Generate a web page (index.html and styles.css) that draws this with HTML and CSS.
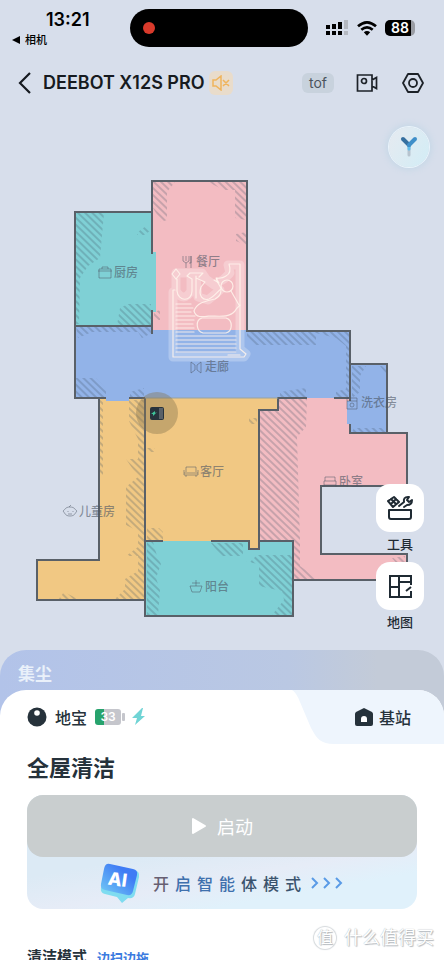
FILE: index.html
```
<!DOCTYPE html>
<html lang="zh-CN">
<head>
  <meta charset="utf-8">
  <meta name="viewport" content="width=device-width, initial-scale=1">
  <title>DEEBOT X12S PRO</title>
  <link rel="stylesheet" href="styles.css">
</head>
<body>
<div class="app">

  <div class="status">
    <div class="status-left">
      <span class="time">13:21</span>
      <a class="return" href="#"><svg width="8" height="8" viewBox="0 0 8 8"><path d="M0 4 8 0v8z"/></svg>相机</a>
    </div>
    <div class="island"><span class="rec"></span></div>
    <div class="status-right">
      <svg width="24" height="16" viewBox="0 0 24 16">
        <path d="M1 5h4v4H1zM7 4h4v5H7zM13 2h4v7h-4zM1 11h4v4H1zM7 11h4v4H7zM13 11h4v4h-4z"/>
        <path d="M19 0h4v9h-4zM19 11h4v4h-4z" fill="#b4b8c0"/>
      </svg>
      <svg width="20" height="15" viewBox="0 0 20 15">
        <g fill="none" stroke="#000" stroke-width="2.7"><path d="M1 5.300Q10-2.500 19 5.300"/><path d="M4.300 8.800Q10 4 15.700 8.800"/></g>
        <path d="M6.800 11.200Q10 8.600 13.200 11.200L10 14.800z"/>
      </svg>
      <span class="battery">88</span>
    </div>
  </div>

  <header class="header">
    <button class="icon-btn back" aria-label="返回">
      <svg width="14" height="24" viewBox="0 0 14 24"><path d="M12 2 2 12l10 10" fill="none" stroke="#161a20" stroke-width="2.200"/></svg>
    </button>
    <h1>DEEBOT X12S PRO</h1>
    <button class="icon-btn mute" aria-label="静音">
      <svg width="18" height="16" viewBox="0 0 18 16" fill="none" stroke="#f0b45c" stroke-width="1.500"><path d="M1 5h3l5-4v14l-5-4H1zM11 5l6 6M17 5l-6 6"/></svg>
    </button>
    <button class="tof">tof</button>
    <button class="icon-btn" aria-label="视频">
      <svg width="22" height="20" viewBox="0 0 22 20" fill="none" stroke="#1d2228" stroke-width="1.700"><path d="M1.500 2H16v5l4.500-2.500v11L16 13v5H1.500zM16 7v6"/><circle cx="8" cy="8" r="2.500"/></svg>
    </button>
    <button class="icon-btn" aria-label="设置">
      <svg width="22" height="20" viewBox="0 0 22 20" fill="none" stroke="#1d2228" stroke-width="1.800" stroke-linejoin="round"><path d="M6 1h10l5 9-5 9H6l-5-9z"/><circle cx="11" cy="10" r="4"/></svg>
    </button>
  </header>

  <main class="map">
    <svg class="plan" viewBox="0 110 444 540">
      <defs>
        <pattern id="hatch" width="5" height="5" patternUnits="userSpaceOnUse" patternTransform="rotate(-46)">
          <path d="M1 0v5" stroke="#3c5064" stroke-opacity=".3" stroke-width="1.600"/>
        </pattern>
      </defs>

      <!-- rooms -->
      <path fill="#f3bcc2" d="M152 181h95v150h-95z"/>
      <path fill="#7fd0d5" d="M75 212h77v40h4v60h-4v14H75z"/>
      <path fill="#92b3e8" d="M75 326h77v4h95v1h103v67H75z"/>
      <path fill="#f1c883" d="M99 398h46v202H37v-40h62z"/>
      <path fill="#f1c883" d="M145 398h133v12h-19v139h-10v-8H145z"/>
      <path fill="#f3bcc2" d="M278 398h72v35h57v53h-86v68h86v26H293v-39h-34V410h19z"/>
      <path fill="#92b3e8" d="M350 364h37v69h-37v-9h-3v-23h3zM106 397h23v4h-23z"/>
      <path fill="#7fd0d5" d="M145 541h104v8h10v-8h34v75H145z"/>

      <!-- hatched floor edges -->
      <g fill="url(#hatch)">
        <path d="M76 213h28l-4 45-12 8-8 12-1 46h-3zM138 232l8-6 4 5-6 4h-7zM120 308l8-4h23v21h-34z"/>
        <path d="M153 182h22l-8 10v28l-6 2-8-14zM208 182h38v38l-11-2v-28h-11zM236 234l10-2v13l-10-4zM154 312l6-2v10h-6z"/>
        <path d="M76 327h76v6l-10 5-4-6H92l-14 6zM247 332h102v60h-3v-46l-10-8-20-5v12h-61l-8-7zM76 378h20l10 10v9H76zM130 392l14-4v9h-14zM280 392l26-4v9h-26zM336 392l12-4v9h-12z"/>
        <path d="M129 400h15v199h-29l10-10v-10l13-8v-15h-12l12-9v-16l-12-6v-38l12-10-12-18h12v-20l-9-18zM100 400h3v76h-3zM58 600l6-8 16 8zM147 448h8v4h-8zM147 528h12l4 4v8h-16zM249 418h8v6h-8z"/>
        <path d="M260 411h18v-12h29l-1 28-9 10 3 104v25l20 14h-26v-39h-34zM392 558l13-2v18z"/>
        <path d="M352 366h14l-6 10v16l-8 6zM380 366h6v8zM354 428h32v4h-34z"/>
        <path d="M147 542h6l4 14 4 8-5 14 4 12-2 25h-11zM211 543h32v14l6 6 8-8h35v60h-20l12-15-2-9-14-3-9-2V564l-12-2-4-6h-22z"/>
      </g>

      <!-- cleaning track -->
      <g fill="none" stroke="#fff" stroke-linejoin="round" stroke-linecap="round">
        <path d="M173 292v65h71l2-3-6-5v-84h-12l2 8-6 6-10 6-8-6-4-6h-26v18q8 12 15 0v-16M196 277l2 20 10 3 12-10" stroke-opacity=".25" stroke-width="9"/>
        <g stroke="#fff4ec" stroke-opacity=".85" stroke-width="1.200">
          <path d="M175 290h-2v67h71l2-3-6-5v-85h-11q3 9-3 12-4 3-10 2l3 5-5-3M172 274l4-5 4 5-4 5zM177 279v12c1 11 15 11 15 0v-12l-5-3 3-3h13l-4 4"/>
          <path d="M196 276v22M196 278l9 4-4 5c-3 9 2 14 8 12 5-2 8-7 12-10-1-5-6-8-4-11"/>
          <circle cx="227" cy="286" r="6"/>
          <path d="M221 290q0 6-6 9c-8 2-18 3-21 12 2 7 8 6 15 5 10 0 20 2 26-5 3-5 5-5 5-6M231 291l8 14"/>
          <path d="M202 318h24c7 2 7 13 0 15h-23c-7-2-8-13-1-15z"/>
          <path d="M176 304h15M176 308h17M176 312h15M176 316h19M176 320h18M176 324h17M176 328h18M176 332h18M176 336h60M176 340h60M176 344h60M176 348h60M176 352h60M228 355h12"/>
        </g>
      </g>

      <!-- walls -->
      <path class="wall" d="M152 254v-73h95v150h103v70M152 212H75v186h31M75 326h77v-16M152 326v8M129 398h16M99 398v162H37v40h108M145 398v218h148v-75h-34V410h19v-12h29M334 398h16M350 364h37v69M350 424v9h57v53h-86v68h86v26H293M145 541h18M211 541h38v8h10v-8"/>
      <path d="M145 398h133" stroke="#98a1a0"/>

      <!-- dock and robot -->
      <circle cx="157" cy="413" r="21" fill="#85724e" fill-opacity=".4"/>
      <rect x="150" y="407" width="14" height="13" rx="2" fill="#28333c"/>
      <path d="M159 408h4v11h-4z" fill="#596168"/>
      <path d="m151 414 4-3v2l2-1-4 4v-2z" fill="#3fc69b"/>

      <g class="room-icon">
        <path d="M99 269h12v9H99zM98 271h14M102 269v-2h6v2"/>
        <path d="M183 256v5l3 2v5M189 256v5l-3 2M186 256v5M191 256v12M191 256v7h-2"/>
        <path d="m191 362 4 3v5l-4 3zM201 362l-4 3v5l4 3z"/>
        <path d="M186 472v-5h10v5M184 470v5h14v-5M184 473h14M186 475v2M196 475v2"/>
        <path d="M63 511c2-1 2-4 7-4s5 3 7 4c-2 2-2 5-7 5s-5-3-7-5zM68 511v1M73 511v1M68 514h4M69 507l2-2"/>
        <path d="M190 586h12l-2 6h-8zM196 586v-6M192 583h8"/>
        <path d="M347 398h10v11h-10zM347 401h10"/><circle cx="352" cy="405" r="2"/>
        <path d="M325 481v-4h10v4M324 481h12v4h-12zM324 485v2M336 485v2"/>
      </g>
      <g class="room-name">
        <text x="114" y="277">厨房</text>
        <text x="196" y="266">餐厅</text>
        <text x="205" y="371">走廊</text>
        <text x="200" y="476">客厅</text>
        <text x="79" y="516">儿童房</text>
        <text x="205" y="591">阳台</text>
        <text x="361" y="407">洗衣房</text>
        <text x="339" y="486">卧室</text>
      </g>
    </svg>

    <button class="assistant" aria-label="语音助手">
      <svg width="18" height="22" viewBox="0 0 18 22" fill="none" stroke-linecap="round">
        <path d="M9 11v8" stroke="#b7c4cf" stroke-width="3"/>
        <path d="M9 9v4" stroke="#62bdea" stroke-width="3"/>
        <path d="m3 3 6 6" stroke="#356f9f" stroke-width="4"/>
        <path d="m15 3-6 6" stroke="#3f8fc9" stroke-width="4"/>
      </svg>
    </button>

    <div class="tools">
      <button class="tool">
        <span class="tool-box">
          <svg width="26" height="26" viewBox="0 0 26 26" fill="none" stroke="#1f2a33" stroke-width="2" stroke-linejoin="round" stroke-linecap="round">
            <path d="M2 15h22v7q0 2-2 2H4q-2 0-2-2z"/><path d="m1 6 6-4 5 5-6 5zM4 4l5 5M4 9l5-5"/>
            <path d="m12 11 5-4q-1-5 4-5l1 0-2 3 2 2 3-2q0 5-5 5l-3 2"/>
          </svg>
        </span>
        工具
      </button>
      <button class="tool">
        <span class="tool-box">
          <svg width="24" height="24" viewBox="0 0 24 24" fill="none" stroke="#1f2a33" stroke-width="2">
            <path d="M23 11V2H2v21h9V2M2 13h9M11 8h12M23 13l-5 4M11 23h12v-6"/>
          </svg>
        </span>
        地图
      </button>
    </div>
  </main>

  <section class="sheet">
    <div class="dust">集尘</div>
    <div class="card">
      <nav class="tabs">
        <a class="tab" href="#">
          <svg width="20" height="20" viewBox="0 0 20 20"><circle cx="10" cy="10" r="9.500" fill="#26323b"/><circle cx="10" cy="6" r="2.800" fill="#fff"/></svg>
          地宝
          <span class="charge">33</span>
          <svg width="14" height="18" viewBox="0 0 14 18"><path d="M10 0 0 10h5l-2 7L13 8H9l2-8z" fill="#70d4d5"/></svg>
        </a>
        <a class="tab station" href="#">
          <svg class="station-bg" width="152" height="54" viewBox="0 0 152 54"><path d="M0 0h152v54H42C29 54 25 49 19 38L8 12Q4 2 0 0z" fill="#eef5fd"/></svg>
          <svg width="18" height="18" viewBox="0 0 18 18"><path d="m9 0 8 4q1 1 1 2v10q0 2-2 2H2q-2 0-2-2V6q0-1 1-2z" fill="#26323b"/><path d="M6 14v-3a3 3 0 0 1 6 0v3z" fill="#fff"/></svg>
          基站
        </a>
      </nav>

      <h2>全屋清洁</h2>

      <div class="actions">
        <button class="start">
          <svg width="16" height="18" viewBox="0 0 16 18"><path d="M2 2v14l12-7z" fill="#fff" stroke="#fff" stroke-width="2" stroke-linejoin="round"/></svg>
          启动
        </button>
        <a class="agent" href="#">
          <svg width="42" height="42" viewBox="0 0 42 42">
            <defs><linearGradient id="ai" x1="1" y1="0" x2="0" y2="1"><stop offset=".3" stop-color="#3f7cf5"/><stop offset="1" stop-color="#74cdf5"/></linearGradient></defs>
            <path d="m12 3 23 5q6 1 5 7l-4 17q-1 5-7 4l-6 5-5-6-12-3q-5-1-4-7L6 8q1-6 6-5z" fill="#7fdcf0"/>
            <path d="m11 2 23 5q5 1 4 6l-4 16q-1 5-6 4L6 28q-5-1-4-6L5 7q1-6 6-5z" fill="url(#ai)"/>
            <text x="9" y="24" transform="rotate(8 20 18)" class="ai-text">AI</text>
          </svg>
          <span class="agent-text"><span>开</span><span>启</span><span>智</span><span>能</span><span>体</span><span>模</span><span>式</span></span>
          <svg width="32" height="12" viewBox="0 0 32 12" fill="none" stroke="#5a9be6" stroke-width="2"><path d="m1 1 5 5-5 5M13 1l5 5-5 5M25 1l5 5-5 5"/></svg>
        </a>
      </div>

      <div class="mode"><h3>清洁模式</h3><a href="#">边扫边拖</a></div>
    </div>
  </section>

  <div class="watermark"><span class="mark">值</span>什么值得买</div>
</div>
</body>
</html>
```
FILE: styles.css
```
* {
  box-sizing: border-box;
}
body {
  margin: 0;
  background: #d7deeb;
  color: #161a20;
  font-family: Inter, "Noto Sans CJK SC", sans-serif;
}
h1, h2, h3 {
  margin: 0;
}
a {
  color: inherit;
  text-decoration: none;
}
button {
  padding: 0;
  border: 0;
  background: none;
  color: inherit;
  font: inherit;
}
svg {
  display: block;
  flex-shrink: 0;
}
.app {
  position: relative;
  height: 100vh;
  overflow: hidden;
}

/* status bar */
.status {
  display: grid;
  grid-template-columns: calc(50% - 92px) 178px 1fr;
  align-items: center;
  height: 56px;
  color: #000;
}
.status-left {
  display: flex;
  flex-direction: column;
  padding-left: 12px;
}
.time {
  padding-left: 34px;
  font-size: 18px;
  font-weight: 600;
  line-height: 24px;
}
.return {
  display: flex;
  align-items: center;
  gap: 5px;
  font-size: 11px;
  font-weight: 500;
  line-height: 16px;
}
.island {
  display: flex;
  align-items: center;
  height: 38px;
  padding-left: 13px;
  border-radius: 19px;
  background: #000;
}
.rec {
  width: 12px;
  height: 12px;
  border-radius: 50%;
  background: #d93a2b;
}
.status-right {
  display: flex;
  align-items: center;
  justify-content: flex-end;
  gap: 8px;
  padding-right: 29px;
}
.battery {
  width: 30px;
  border-radius: 5px;
  background: linear-gradient(90deg, #000 88%, #9a9da4 88%);
  color: #fff;
  font-size: 14px;
  font-weight: 600;
  line-height: 16px;
  text-align: center;
}

/* title bar */
.header {
  display: flex;
  align-items: center;
  height: 54px;
  padding: 0 20px 0 18px;
}
.back {
  margin-right: 11px;
}
h1 {
  font-size: 18px;
  font-weight: 600;
  line-height: 24px;
  white-space: nowrap;
}
.mute {
  display: flex;
  align-items: center;
  justify-content: center;
  width: 24px;
  height: 24px;
  margin-left: 4px;
  border-radius: 6px;
  background: #e9dccb;
}
.tof {
  width: 32px;
  margin: 0 22px 0 auto;
  border-radius: 6px;
  background: #c8d2dd;
  color: #4b545d;
  font-size: 14px;
  line-height: 20px;
}
.header .icon-btn:last-child {
  margin-left: 24px;
}

/* map */
.map {
  position: relative;
}
.plan {
  width: 100%;
  height: 540px;
}
.wall {
  fill: none;
  stroke: #596068;
  stroke-width: 2;
}
.room-icon {
  fill: none;
  stroke: #4b5563;
  stroke-opacity: .5;
}
.room-name {
  fill: #4b5563;
  fill-opacity: .6;
  font-size: 12px;
  font-weight: 500;
}
.assistant {
  position: absolute;
  top: 17px;
  right: 15px;
  display: flex;
  align-items: center;
  justify-content: center;
  width: 40px;
  height: 40px;
  border-radius: 50%;
  background: linear-gradient(120deg, #e6eaf0, #d2edf6);
  box-shadow: 0 0 0 1px #eaf4fb, 0 0 6px 3px #c6d8e7;
}
.tools {
  position: absolute;
  top: 374px;
  right: 20px;
  display: flex;
  flex-direction: column;
  gap: 8px;
}
.tool {
  display: flex;
  flex-direction: column;
  align-items: center;
  gap: 2px;
  color: #1f2a33;
  font-size: 13px;
  font-weight: 500;
  line-height: 20px;
}
.tool-box {
  display: flex;
  align-items: center;
  justify-content: center;
  width: 48px;
  height: 48px;
  border-radius: 14px;
  background: #fff;
}

/* bottom sheet */
.sheet {
  border-radius: 26px 26px 0 0;
  background: linear-gradient(90deg, #b2c3e9, #bac8e3 65%, #c3cbd8 85%);
}
.dust {
  height: 40px;
  padding: 8px 18px;
  color: #eaf1fa;
  font-size: 17px;
  font-weight: 700;
  line-height: 32px;
}
.card {
  padding-bottom: 24px;
  border-radius: 26px 26px 0 0;
  background: #fff;
  overflow: hidden;
}
.tabs {
  display: flex;
  justify-content: space-between;
  height: 54px;
  padding-left: 27px;
}
.tab {
  display: flex;
  align-items: center;
  gap: 8px;
  color: #26323b;
  font-size: 16px;
  font-weight: 500;
}
.station {
  position: relative;
  isolation: isolate;
  gap: 6px;
  width: 152px;
  padding-left: 63px;
}
.station-bg {
  position: absolute;
  inset: 0;
  z-index: -1;
}
.charge {
  position: relative;
  width: 26px;
  margin-right: 3px;
  border-radius: 3px;
  background: linear-gradient(90deg, #27a36d 33%, #c5c6cc 33%);
  color: #fff;
  font-size: 12px;
  font-weight: 600;
  line-height: 16px;
  text-align: center;
}
.charge::after {
  content: "";
  position: absolute;
  top: 4px;
  right: -4px;
  width: 3px;
  height: 8px;
  border-radius: 1px;
  background: #c5c6cc;
}
h2 {
  padding: 8px 27px 11px;
  color: #26323b;
  font-size: 22px;
  font-weight: 700;
  line-height: 32px;
}
.actions {
  margin: 0 27px;
  border-radius: 16px;
  background: linear-gradient(170deg, #dceaf5 45%, #e6ecf7 65%, #e0f1fb 80%);
}
.start {
  display: flex;
  align-items: center;
  justify-content: center;
  gap: 10px;
  width: 100%;
  height: 62px;
  border-radius: 16px;
  background: #c9cecf;
  color: #fff;
  font-size: 18px;
}
.agent {
  display: flex;
  align-items: center;
  height: 52px;
  padding-left: 72px;
}
.ai-text {
  fill: #fff;
  font-size: 18px;
  font-weight: 800;
}
.agent-text {
  display: flex;
  gap: 6px;
  margin: 0 10px 0 12px;
  color: #3a536d;
  font-size: 16px;
  font-weight: 500;
}
.agent-text span:first-child {
  color: #675f72;
}
.agent-text span:nth-child(2),
.agent-text span:nth-child(3),
.agent-text span:nth-child(4) {
  color: #3f70ad;
}
.mode {
  display: flex;
  align-items: center;
  gap: 10px;
  padding: 36px 27px 0;
}
.mode h3 {
  color: #26323b;
  font-size: 15px;
  font-weight: 700;
  line-height: 24px;
}
.mode a {
  color: #3c7be0;
  font-size: 13px;
  font-weight: 700;
}

/* watermark over the sheet */
.watermark {
  position: absolute;
  right: 10px;
  bottom: 10px;
  display: flex;
  align-items: center;
  gap: 8px;
  color: #fff;
  font-size: 18px;
  line-height: 24px;
  text-shadow: 0 0 1px #a4abb1, 1px 1px 1px #b6bbc0;
}
.mark {
  width: 22px;
  height: 22px;
  border-radius: 50%;
  box-shadow: 0 0 1px 1px #d5d9dc;
  font-size: 16px;
  line-height: 21px;
  text-align: center;
}
```
